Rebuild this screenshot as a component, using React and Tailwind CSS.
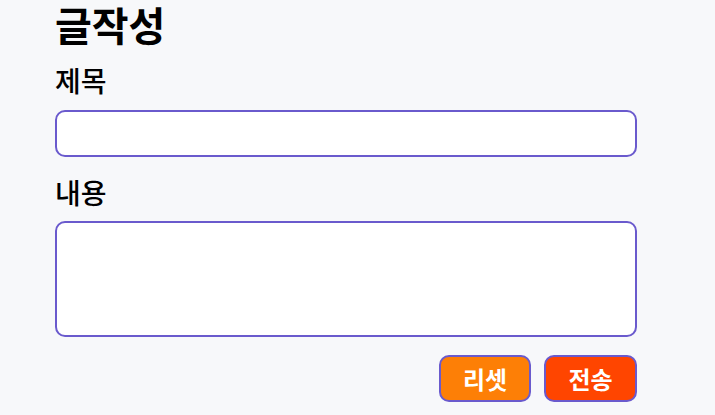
import React, { useState } from 'react';

const App = () => {
    const [title, setTitle] = useState('');
    const [content, setContent] = useState('');

    const handleReset = () => {
        setTitle('');
        setContent('');
    };

    return (
        <div className="min-h-screen bg-[#f7f8fa] px-[55px] font-['Noto_Sans_CJK_KR',sans-serif] text-black">
            <div className="w-[582px] flex flex-col">
                <h1 className="text-[40px] leading-[48px] font-bold">글작성</h1>

                <label className="mt-[17px] text-[28px] leading-[30px] font-medium">제목</label>
                <input
                    value={title}
                    onChange={(e) => setTitle(e.target.value)}
                    className="mt-[15px] h-[47px] bg-white border-2 border-[#6a5acd] rounded-[10px] px-3 outline-none"
                />

                <label className="mt-[20px] text-[28px] leading-[30px] font-medium">내용</label>
                <textarea
                    value={content}
                    onChange={(e) => setContent(e.target.value)}
                    className="mt-[14px] h-[116px] bg-white border-2 border-[#6a5acd] rounded-[10px] px-3 py-2 outline-none resize-none"
                />

                <div className="mt-[18px] flex justify-end gap-[13px]">
                    <button
                        onClick={handleReset}
                        className="w-[92px] h-[47px] bg-[#fd7f06] border-2 border-[#6a5acd] rounded-[10px] text-white text-[24px] font-bold"
                    >
                        리셋
                    </button>
                    <button className="w-[93px] h-[47px] bg-[#ff4500] border-2 border-[#6a5acd] rounded-[10px] text-white text-[24px] font-bold">
                        전송
                    </button>
                </div>
            </div>
        </div>
    );
};

export default App;
